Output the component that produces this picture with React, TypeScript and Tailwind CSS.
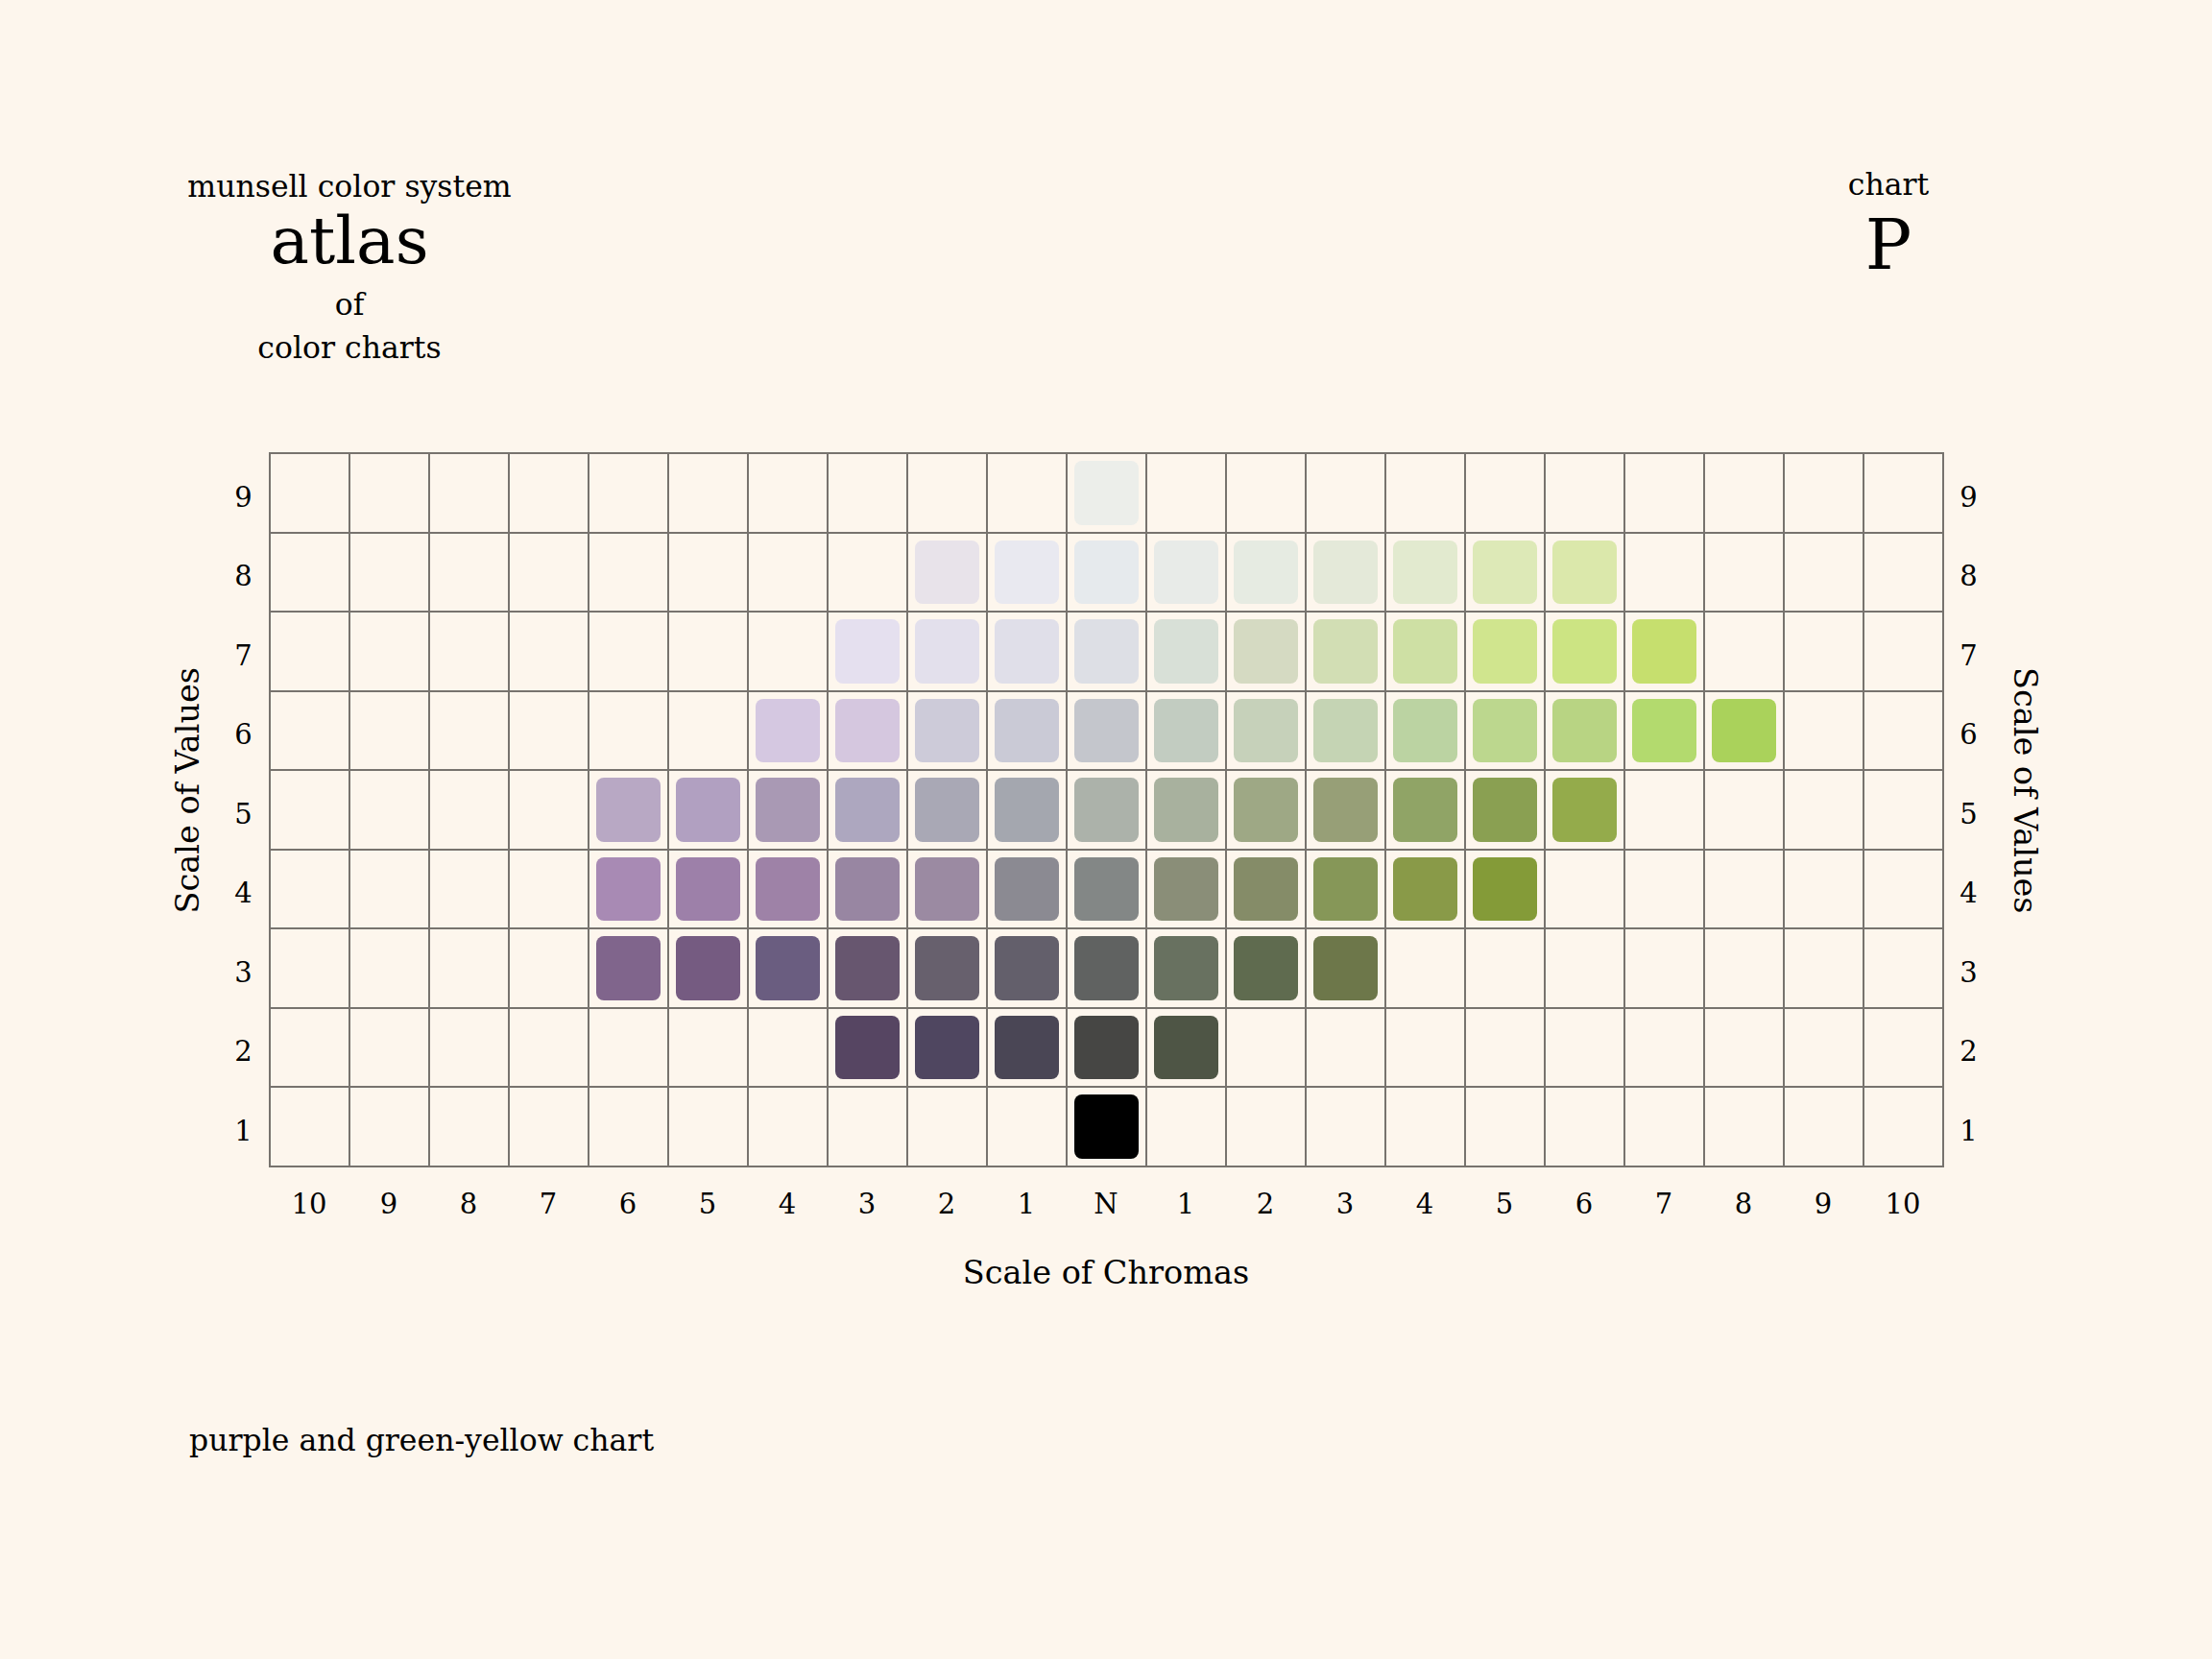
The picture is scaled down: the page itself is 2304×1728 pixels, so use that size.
import React from "react";

type Row = { value: number; purple: string[]; neutral: string; gy: string[] };

// purple[i] / gy[i] = chroma i + 1
const rows: Row[] = [
  { value: 9, purple: [], neutral: "#eceeea", gy: [] },
  {
    value: 8,
    purple: ["#e9e9f0", "#e8e3ea"],
    neutral: "#e6eaed",
    gy: ["#e8ebe8", "#e6ebe2", "#e4e9d9", "#e2eacf", "#dde9b7", "#dbe8ab"],
  },
  {
    value: 7,
    purple: ["#e0dfe9", "#e3e0ec", "#e5e0ef"],
    neutral: "#dddfe5",
    gy: ["#d8e0d7", "#d5dac2", "#d2deb4", "#cee0a4", "#d0e58e", "#cce483", "#c6df6e"],
  },
  {
    value: 6,
    purple: ["#cacad6", "#cdcbd9", "#d5c7df", "#d5c8e1"],
    neutral: "#c4c6cc",
    gy: ["#c2ccc1", "#c6d1ba", "#c5d4b4", "#bbd3a2", "#bcd78e", "#b8d483", "#b3da6e", "#aad25b"],
  },
  {
    value: 5,
    purple: ["#a4a7af", "#a9a8b5", "#ada7bf", "#a999b4", "#b1a0c1", "#b8a8c4"],
    neutral: "#acb2aa",
    gy: ["#a8b19e", "#9ea885", "#979f77", "#90a466", "#8aa052", "#94ab4b"],
  },
  {
    value: 4,
    purple: ["#8b8a92", "#9b8aa2", "#9886a2", "#9e82a7", "#9d80a9", "#a88ab4"],
    neutral: "#838786",
    gy: ["#8a8e78", "#858c68", "#869758", "#899a48", "#849b38"],
  },
  {
    value: 3,
    purple: ["#635f6b", "#67606d", "#67566f", "#6a5d80", "#755b81", "#80658c"],
    neutral: "#606261",
    gy: ["#687160", "#5f6b4f", "#6d774a"],
  },
  {
    value: 2,
    purple: ["#4a4655", "#4f4660", "#564562"],
    neutral: "#464644",
    gy: ["#4e5545"],
  },
  { value: 1, purple: [], neutral: "#000000", gy: [] },
];

const chromaLabels = ["10", "9", "8", "7", "6", "5", "4", "3", "2", "1", "N", "1", "2", "3", "4", "5", "6", "7", "8", "9", "10"];

function swatchColor(row: Row, col: number): string | undefined {
  if (col < 10) return row.purple[10 - col - 1];
  if (col === 10) return row.neutral;
  return row.gy[col - 11];
}

function ValueNumbers() {
  return (
    <div className="flex w-[52px] flex-col pt-[2px]">
      {rows.map((r) => (
        <div key={r.value} className="flex h-[82.5px] items-center justify-center pt-[8px] text-[29px] leading-none">
          {r.value}
        </div>
      ))}
    </div>
  );
}

export default function App() {
  return (
    <main className="min-h-screen w-full bg-[#fdf6ed] pb-[150px] font-['DejaVu_Serif',serif] text-black">
      <header className="flex items-start justify-between pl-[194px] pr-[237px] pt-[172px]">
        <div className="mt-[2px] flex w-[340px] flex-col items-center whitespace-nowrap">
          <p className="text-[31.5px] leading-[40px]">munsell color system</p>
          <p className="mt-[2px] text-[68px] leading-[70px]">atlas</p>
          <p className="mt-[11px] text-[31.5px] leading-[40px]">of</p>
          <p className="mt-[5px] text-[31.5px] leading-[40px]">color charts</p>
        </div>
        <div className="flex w-[200px] flex-col items-center">
          <p className="text-[31.5px] leading-[40px]">chart</p>
          <p className="mt-[7px] text-[72px] font-medium leading-[72px]">P</p>
        </div>
      </header>

      <section className="mt-[89px] flex items-start justify-center">
        <div className="flex h-[745px] w-[64px] items-center justify-center pb-[40px]">
          <span className="rotate-180 whitespace-nowrap text-[33.5px] leading-[40px] [writing-mode:vertical-rl]">
            Scale of Values
          </span>
        </div>
        <ValueNumbers />

        <div className="flex flex-col">
          <div className="grid grid-cols-[repeat(21,81px)] grid-rows-[repeat(9,80.5px)] gap-[2px] bg-[#77736e] p-[2px]">
            {rows.map((r) =>
              chromaLabels.map((_, col) => {
                const color = swatchColor(r, col);
                return (
                  <div key={`${r.value}-${col}`} className="bg-[#fdf6ed] p-[7px]">
                    {color && <div className="h-full w-full rounded-[8px]" style={{ backgroundColor: color }} />}
                  </div>
                );
              })
            )}
          </div>
          <div className="mt-[18px] grid grid-cols-[repeat(21,81px)] gap-[2px] px-[2px]">
            {chromaLabels.map((l, i) => (
              <div key={i} className="text-center text-[29px] leading-[40px]">
                {l}
              </div>
            ))}
          </div>
        </div>

        <ValueNumbers />
        <div className="flex h-[745px] w-[64px] items-center justify-center pb-[40px]">
          <span className="whitespace-nowrap text-[33.5px] leading-[40px] [writing-mode:vertical-rl]">
            Scale of Values
          </span>
        </div>
      </section>

      <p className="mt-[32px] text-center text-[33.5px] leading-[40px]">Scale of Chromas</p>

      <p className="mt-[134px] pl-[197px] text-[31.5px] leading-[40px]">purple and green-yellow chart</p>
    </main>
  );
}
